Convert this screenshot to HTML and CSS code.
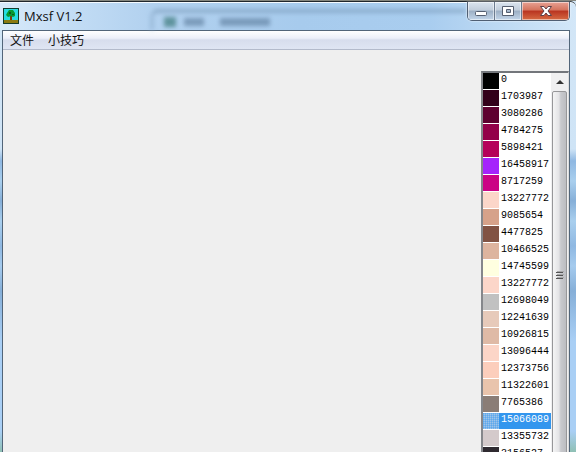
FILE: index.html
```html
<!DOCTYPE html>
<html lang="zh-CN">
<head>
    <meta charset="UTF-8">
    <meta name="viewport" content="width=device-width, initial-scale=1.0">
    <title>Mxsf V1.2</title>
    <link rel="stylesheet" href="styles.css">
</head>
<body>
    <div class="window">
        <header class="titlebar">
            <div class="behind">
                <span class="behind-icon"></span>
                <span class="behind-text"></span>
                <span class="behind-text wide"></span>
            </div>
            <svg class="app-icon" width="16" height="16" viewBox="0 0 16 16">
                <rect width="16" height="16" fill="#123c2c"/>
                <rect x="1" y="1" width="14" height="11" fill="#27dce0"/>
                <rect x="1" y="12" width="14" height="3" fill="#8a7a12"/>
                <path d="M7 7h2v5H7z" fill="#7c3d10"/>
                <path d="M4 5l2-3h4l2 3v3l-2 1-2-1-3 1-2-2z" fill="#079a31"/>
                <path d="M6 4h2v2H6zM9 6h2v1H9z" fill="#0b5c20"/>
            </svg>
            <h1 class="title">Mxsf V1.2</h1>
            <div class="controls">
                <button class="control" aria-label="最小化">
                    <svg width="14" height="12" viewBox="0 0 14 12"><rect x="1.5" y="6.5" width="11" height="4" rx="1" fill="#fff" stroke="#555f70"/></svg>
                </button>
                <button class="control" aria-label="最大化">
                    <svg width="14" height="12" viewBox="0 0 14 12"><path d="M1.5 1.5h11v9h-11zM5.500 4.500v3h4v-3z" fill="#fff" fill-rule="evenodd" stroke="#555f70"/></svg>
                </button>
                <button class="control close" aria-label="关闭">
                    <svg width="14" height="12" viewBox="0 0 14 12"><path d="M1.500 1.500h3.500l2 2.500 2-2.500h3.500L9 6l3.500 4.500H9L7 8l-2 2.500H1.500L5 6z" fill="#fff" stroke="#5d4048"/></svg>
                </button>
            </div>
        </header>
        <main class="client">
            <nav class="menubar">
                <button class="menu-item">文件</button>
                <button class="menu-item">小技巧</button>
            </nav>
            <div class="content">
                <div class="color-box">
                    <ul class="color-list" id="colors" role="listbox" aria-label="颜色"></ul>
                    <div class="scrollbar">
                        <button class="scroll-up" aria-label="向上滚动">
                            <svg width="8" height="4" viewBox="0 0 8 4"><path d="M0 4l4-4 4 4z" fill="#333"/></svg>
                        </button>
                        <div class="thumb">
                            <svg width="8" height="8" viewBox="0 0 8 8"><path d="M0 1.500h7M0 4.500h7M0 7.500h7" stroke="#555"/><path d="M1 .5h7M1 3.500h7M1 6.500h7" stroke="#a8a8aa"/></svg>
                        </div>
                    </div>
                </div>
            </div>
        </main>
    </div>

    <script src="script.js"></script>
</body>
</html>
```

FILE: script.js
```js
const list = document.getElementById('colors');
const selected = 15066089;
const colors = [
    0, 1703987, 3080286, 4784275, 5898421, 16458917, 8717259, 13227772,
    9085654, 4477825, 10466525, 14745599, 13227772, 12698049, 12241639,
    10926815, 13096444, 12373756, 11322601, 7765386, 15066089, 13355732,
    3156527
];

// values are stored as BGR integers
function toRgb(value) {
    return `rgb(${value & 255}, ${(value >> 8) & 255}, ${(value >> 16) & 255})`;
}

colors.forEach((value) => {
    const item = document.createElement('li');
    item.className = 'color-item';
    item.setAttribute('role', 'option');
    item.setAttribute('aria-selected', value === selected);

    const swatch = document.createElement('span');
    swatch.className = 'swatch';
    swatch.style.backgroundColor = toRgb(value);

    const label = document.createElement('span');
    label.className = 'value';
    label.textContent = value;

    item.append(swatch, label);
    list.append(item);
});
```

FILE: styles.css
```css
* {
    box-sizing: border-box;
}
body {
    margin: 0;
    font-family: "Open Sans", "Noto Sans CJK SC", sans-serif;
    font-size: 12px;
    color: #111;
}
button {
    font: inherit;
    color: inherit;
    border: none;
    padding: 0;
    background: none;
}
.window {
    height: 100vh;
    overflow: hidden;
    display: flex;
    flex-direction: column;
    padding: 0 6px 0 2px;
    border-top: 1px solid #85877f;
    background: linear-gradient(to bottom, #d3e6f6, #cfe4f6 148px, #8fb8e2 160px, #a9cfee 180px, #86afd8 200px, #a9cfee 220px, #8fb8e2 245px, #a5cbee 265px, #86afd8 290px, #a9cff5 340px, #a9cff5 430px, #8fc0b4);
}
.titlebar {
    position: relative;
    flex: none;
    height: 29px;
    margin: 0 -6px 0 -2px;
    padding: 0 6px 0 3px;
    display: flex;
    align-items: center;
    gap: 5px;
    border-top: 1px solid #20272d;
    border-top-right-radius: 6px;
    box-shadow: inset 0 1px #f4faff;
    background: linear-gradient(to right, #d8eafa, #c3ddf5 70px, #b2d1ef 150px, #a7cbed 300px, #a9cdef 430px, #d3e7f8);
}
/* blurred window showing through the glass */
.behind {
    position: absolute;
    left: 150px;
    right: 110px;
    top: 7px;
    bottom: 0;
    padding: 4px 10px;
    display: flex;
    align-items: center;
    gap: 8px;
    border-top: 4px solid #7899b8;
    border-left: 4px solid #8eafcf;
    border-top-left-radius: 8px;
    filter: blur(2px);
    opacity: 0.6;
}
.behind-icon {
    width: 12px;
    height: 10px;
    background: #2a6c68;
}
.behind-text {
    width: 20px;
    height: 8px;
    background: #5a7a9a;
}
.behind-text.wide {
    width: 50px;
    margin-left: 8px;
}
.app-icon, .title, .controls {
    position: relative;
}
.title {
    margin: 0;
    font-size: 13px;
    font-weight: normal;
}
.controls {
    display: flex;
    align-self: flex-start;
    margin-left: auto;
    height: 19px;
    border: 1px solid #505f73;
    border-top: none;
    border-radius: 0 0 5px 5px;
    overflow: hidden;
    box-shadow: 0 0 2px #fff;
}
.control {
    width: 27px;
    display: flex;
    align-items: center;
    justify-content: center;
    border-right: 1px solid #6b7b8f;
    box-shadow: inset 0 0 0 1px rgba(255, 255, 255, 0.5);
    background: linear-gradient(to bottom, #dbe5ef, #c2cedc 45%, #9cafc4 50%, #c3d6ea);
}
.control.close {
    width: 47px;
    border-right: none;
    background: linear-gradient(to bottom, #e8a294, #d4735d 45%, #b93420 50%, #d66b43);
}
.client {
    flex: 1;
    min-height: 0;
    display: flex;
    flex-direction: column;
    border: 1px solid #526579;
    border-bottom: none;
    background: #efefef;
}
.menubar {
    flex: none;
    display: flex;
    height: 19px;
    border-bottom: 1px solid #b3bacb;
    background: linear-gradient(to bottom, #fff, #eceff9 40%, #d7dded 50%, #dfe5f3);
}
.menu-item {
    padding: 0 7px;
    line-height: 20px;
}
.content {
    flex: 1;
    min-height: 0;
    display: flex;
    justify-content: flex-end;
    padding-top: 21px;
}
.color-box {
    display: flex;
    width: 88px;
    border-top: 2px solid #73767b;
    border-left: 2px solid #85878b;
    border-right: 1px solid #dcdcdc;
    background: #fff;
    overflow: hidden;
}
.color-list {
    flex: 1;
    margin: 0;
    padding: 0;
    list-style: none;
}
.color-item {
    display: flex;
    height: 17px;
    padding-bottom: 1px;
}
.swatch {
    width: 16px;
}
.value {
    flex: 1;
    padding-left: 2px;
    font-family: "Liberation Mono", monospace;
    font-size: 10px;
    line-height: 14px;
    color: #000;
}
.color-item[aria-selected="true"] .value {
    color: #fff;
    background: #3396ee;
}
/* dithered highlight over the selected colour */
.color-item[aria-selected="true"] .swatch {
    background-image:
        repeating-linear-gradient(to right, rgba(51, 150, 238, 0.4) 0 1px, transparent 1px 2px),
        repeating-linear-gradient(to bottom, rgba(51, 150, 238, 0.6) 0 1px, rgba(51, 150, 238, 0.4) 1px 2px);
}
.scrollbar {
    width: 17px;
    display: flex;
    flex-direction: column;
    background: #f0f0f1;
}
.scroll-up {
    flex: none;
    height: 18px;
    display: flex;
    align-items: center;
    justify-content: center;
}
.thumb {
    flex: none;
    height: 368px;
    display: flex;
    align-items: center;
    justify-content: center;
    margin: 0 1px;
    border: 1px solid #979799;
    border-radius: 2px;
    background: linear-gradient(to right, #f5f5f5, #e4e4e6 45%, #c8c9cd 60%, #bcbdc1);
}
```
